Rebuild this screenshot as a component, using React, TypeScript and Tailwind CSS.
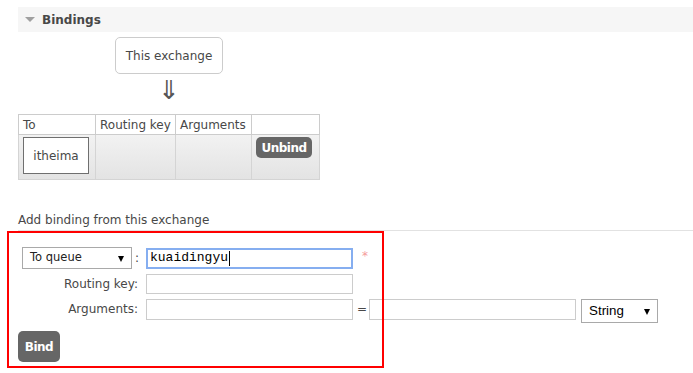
export default function App() {
  return (
    <div className="relative h-[373px] w-[693px] overflow-hidden bg-white pl-[18px] pt-[7px] font-['DejaVu_Sans',sans-serif] text-[12px] text-[#484848]">
      {/* section header */}
      <div className="flex h-[25px] items-center bg-[#f6f6f6] pl-[7px]">
        <span className="h-0 w-0 border-x-[5px] border-t-[5px] border-x-transparent border-t-[#a0a0a0]"></span>
        <span className="ml-[7px] font-bold">Bindings</span>
      </div>

      <div className="ml-[97px] mt-[5px] flex h-[37px] w-[108px] items-center justify-center rounded-[5px] border border-[#ccc]">
        This exchange
      </div>
      <div className="ml-[97px] flex h-[40px] w-[108px] justify-center pt-[3px] font-['DejaVu_Sans_ExtraLight','DejaVu_Sans',sans-serif] text-[26px] leading-[26px] font-extralight text-[#555]">
        ⇓
      </div>

      <table className="w-[302px] table-fixed border-collapse">
        <thead>
          <tr className="h-[20px]">
            <th className="w-[77px] border border-[#ccc] bg-white px-[4px] text-left font-normal">To</th>
            <th className="w-[80px] border border-[#ccc] bg-white px-[4px] text-left font-normal">Routing key</th>
            <th className="w-[76px] border border-[#ccc] bg-white px-[4px] text-left font-normal">Arguments</th>
            <th className="w-[68px] border border-[#ccc] bg-white px-[4px]"></th>
          </tr>
        </thead>
        <tbody>
          <tr className="h-[45px] bg-linear-to-b from-[#f2f2f2] to-[#e3e3e3]">
            <td className="border border-[#d4d4d4] px-[4px] pt-[2px] align-top">
              <div className="flex h-[37px] w-[66px] items-center justify-center border border-[#6f6f6f] bg-white">
                itheima
              </div>
            </td>
            <td className="border border-[#d4d4d4]"></td>
            <td className="border border-[#d4d4d4]"></td>
            <td className="border border-[#d4d4d4] px-[4px] pt-[2px] align-top">
              <button className="flex h-[21px] w-[56px] items-center justify-center rounded-[5px] bg-[#666] text-[12px] font-bold tracking-[-0.5px] text-white">
                Unbind
              </button>
            </td>
          </tr>
        </tbody>
      </table>

      <div className="mt-[33px] border-b border-[#e2e2e2] pb-[2px] leading-[15px]">
        Add binding from this exchange
      </div>

      {/* add binding form */}
      <div className="mt-[16px] pl-[4px]">
        <div className="flex h-[22px] items-center">
          <div className="flex w-[119px] items-center">
            <div className="flex h-[22px] w-[110px] items-center justify-between border border-[#a9a9a9] bg-white px-[7px] text-[11.5px] text-[#222]">
              <span>To queue</span>
              <span className="mt-[1px] h-0 w-0 border-x-[3.5px] border-t-[6px] border-x-transparent border-t-black"></span>
            </div>
            <span className="ml-[3px]">:</span>
          </div>
          <div className="ml-[5px] flex h-[21px] w-[207px] items-center border-2 border-[#86aef0] bg-white pl-[2px] font-['Liberation_Mono',monospace] text-[13px] text-black">
            kuaidingyu
            <span className="ml-px h-[15px] w-px bg-black"></span>
          </div>
          <span className="mb-[4px] ml-[9px] text-[#f59b9b]">*</span>
        </div>

        <div className="mt-[5px] flex items-center">
          <div className="w-[119px] pr-[3px] text-right">Routing key:</div>
          <div className="ml-[5px] h-[20px] w-[207px] border border-[#ccc] bg-white"></div>
        </div>

        <div className="mt-[5px] flex items-start">
          <div className="w-[119px] pr-[3px] text-right leading-[21px]">Arguments:</div>
          <div className="ml-[5px] h-[21px] w-[207px] border border-[#ccc] bg-white"></div>
          <span className="ml-[4px] leading-[21px]">=</span>
          <div className="ml-[2px] h-[21px] w-[207px] border border-[#ccc] bg-white"></div>
          <div className="ml-[5px] flex h-[24px] w-[77px] items-center justify-between border border-[#a9a9a9] bg-white px-[7px] font-['Liberation_Sans',sans-serif] text-[13.33px] text-black">
            <span>String</span>
            <span className="mt-[1px] h-0 w-0 border-x-[3.5px] border-t-[6px] border-x-transparent border-t-black"></span>
          </div>
        </div>

        <button className="-ml-[4px] mt-[8px] flex h-[31px] w-[42px] items-center justify-center rounded-[5px] bg-[#666] text-[12px] font-bold tracking-[-0.5px] text-white">
          Bind
        </button>
      </div>

      {/* red annotation frame */}
      <div className="pointer-events-none absolute left-[7px] top-[231px] h-[137px] w-[377px] border-2 border-[#ff0000]"></div>
    </div>
  );
}
